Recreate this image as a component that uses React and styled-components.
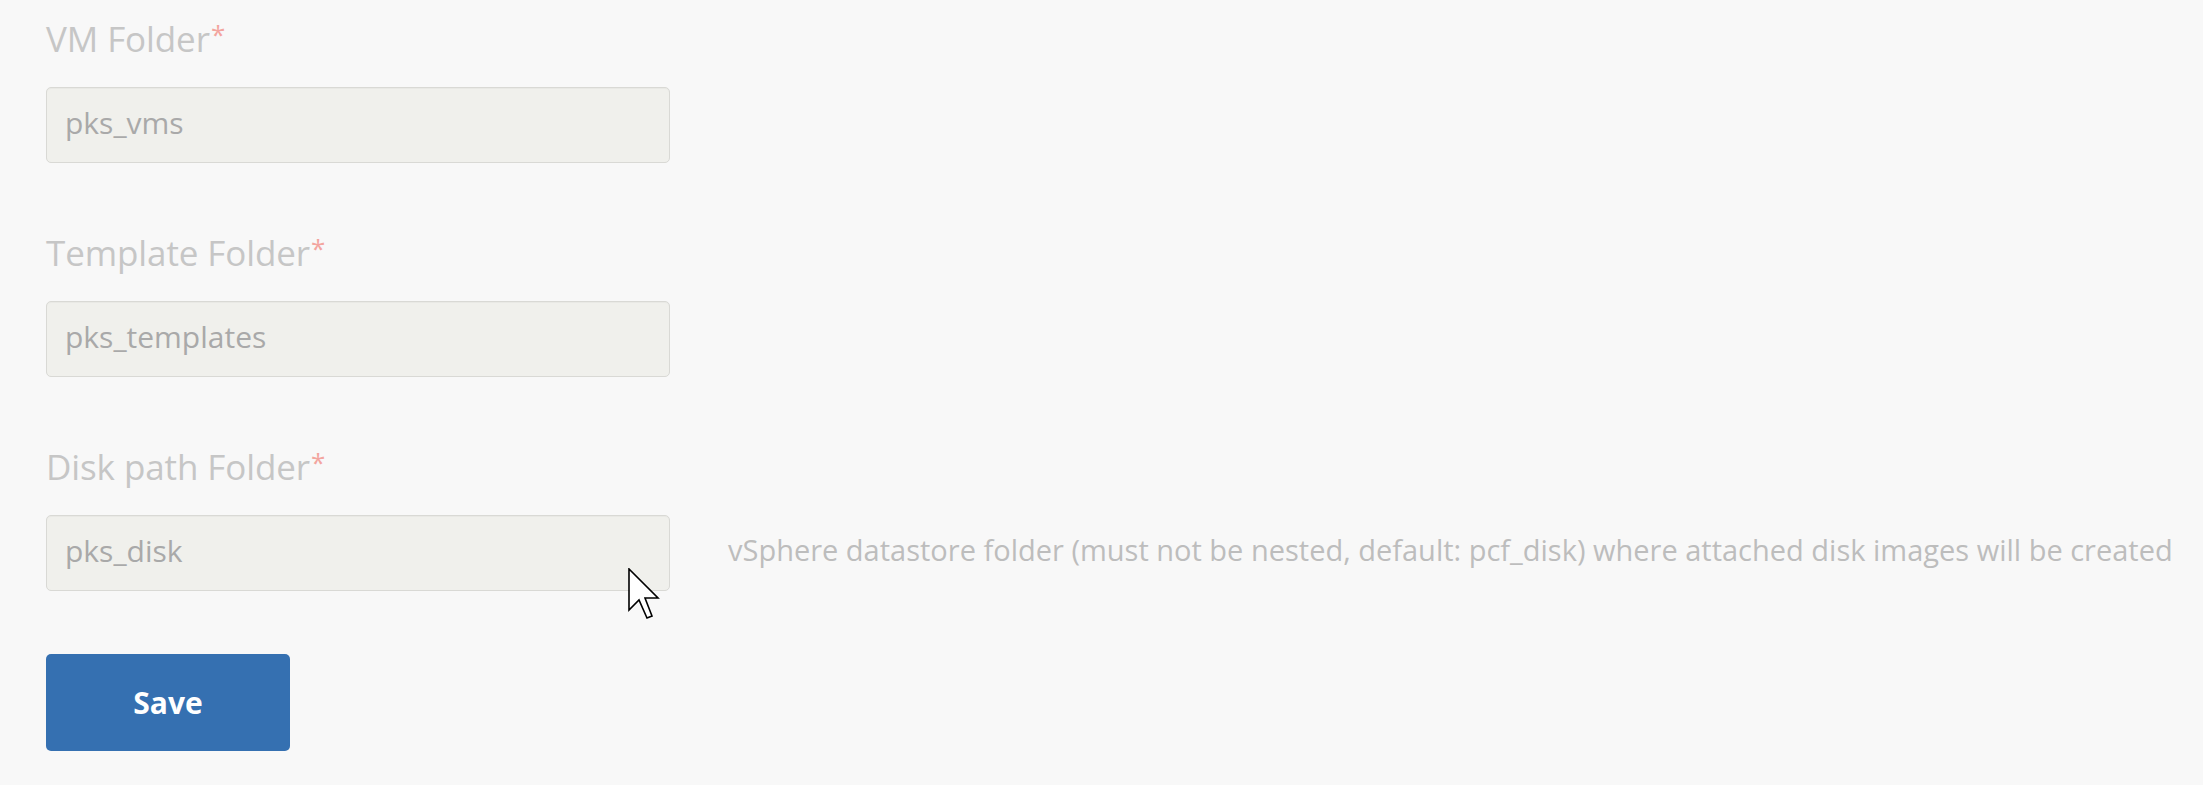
import React from "react";
import styled, { createGlobalStyle } from "styled-components";

const GlobalStyle = createGlobalStyle`
  html, body {
    margin: 0;
    padding: 0;
    background: #f8f8f8;
  }
  body {
    font-family: "Open Sans", "Noto Sans", sans-serif;
  }
`;

const Page = styled.div`
  position: relative;
  min-height: 785px;
  padding: 19px 0 0 46px;
  box-sizing: border-box;
  background: #f8f8f8;
`;

const Form = styled.form`
  display: flex;
  flex-direction: column;
  align-items: flex-start;
`;

const Field = styled.div`
  display: flex;
  flex-direction: column;
  gap: 28px;
  margin-bottom: ${(p) => p.$spacing}px;
`;

const Label = styled.label`
  font-size: 35px;
  line-height: 40px;
  color: #c6c6c6;
  font-weight: 400;
  letter-spacing: -0.1px;
`;

const Required = styled.span`
  color: #f3a59f;
  font-size: 26px;
  vertical-align: top;
  line-height: 26px;
  position: relative;
  top: 2px;
  margin-left: 1px;
`;

const Row = styled.div`
  display: flex;
  align-items: center;
  gap: 58px;
`;

const Input = styled.input`
  box-sizing: border-box;
  width: 624px;
  height: 76px;
  padding: 0 18px 6px;
  margin: 0;
  border: 1px solid #d9d9d5;
  border-radius: 5px;
  background: #f0f0ec;
  font-family: "Open Sans", "Noto Sans", sans-serif;
  font-size: 30px;
  color: #a9a9a9;
  outline: none;
  box-shadow: inset 0 1px 1px rgba(0, 0, 0, 0.03);
`;

const Hint = styled.span`
  font-size: 29px;
  color: #bdbdbd;
  white-space: nowrap;
  padding-bottom: 8px;
`;

const SaveButton = styled.button`
  width: 244px;
  height: 97px;
  border: none;
  border-radius: 5px;
  background: #3570b1;
  color: #ffffff;
  font-family: "Open Sans", "Noto Sans", sans-serif;
  font-size: 30px;
  font-weight: 700;
  cursor: pointer;
  padding: 0;
`;

const Cursor = styled.svg`
  position: absolute;
  left: 628px;
  top: 568px;
  width: 32px;
  height: 52px;
  pointer-events: none;
`;

const fields = [
  { label: "VM Folder", value: "pks_vms", spacing: 70 },
  { label: "Template Folder", value: "pks_templates", spacing: 70 },
  {
    label: "Disk path Folder",
    value: "pks_disk",
    spacing: 63,
    hint:
      "vSphere datastore folder (must not be nested, default: pcf_disk) where attached disk images will be created",
  },
];

export default function App() {
  return (
    <>
      <GlobalStyle />
      <Page>
        <Form onSubmit={(e) => e.preventDefault()}>
          {fields.map((f) => (
            <Field key={f.label} $spacing={f.spacing}>
              <Label>
                {f.label}
                <Required>*</Required>
              </Label>
              <Row>
                <Input readOnly value={f.value} />
                {f.hint && <Hint>{f.hint}</Hint>}
              </Row>
            </Field>
          ))}
          <SaveButton type="submit">Save</SaveButton>
        </Form>
        <Cursor viewBox="-1 -1 32 52">
          <polygon
            points="0,0 0,41 10,31 18,49 23,47 16,29 29,29"
            fill="#ffffff"
            stroke="#000000"
            strokeWidth="1.6"
            strokeLinejoin="miter"
          />
        </Cursor>
      </Page>
    </>
  );
}
